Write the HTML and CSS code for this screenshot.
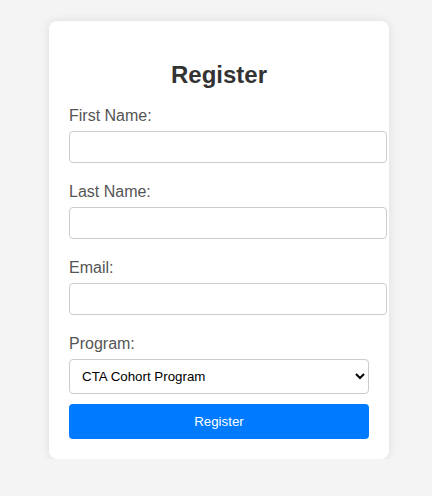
FILE: index.html
```html
<!DOCTYPE html>
<html>
<head>
<meta charset="utf-8">
<link rel="stylesheet" href="styles.css">
</head>
<body>
<div class="card">
  <h2 class="title">Register</h2>
  <form class="form">
    <label class="label" for="first">First Name:</label>
    <input class="field" id="first" type="text">
    <label class="label" for="last">Last Name:</label>
    <input class="field" id="last" type="text">
    <label class="label" for="email">Email:</label>
    <input class="field" id="email" type="email">
    <label class="label" for="program">Program:</label>
    <select class="select" id="program">
      <option>CTA Cohort Program</option>
    </select>
    <button class="btn" type="button">Register</button>
  </form>
</div>
</body>
</html>
```

FILE: styles.css
```css
html, body {
  margin: 0;
  padding: 0;
}
body {
  background: #f4f4f4;
  font-family: "Liberation Sans", Arial, sans-serif;
  padding: 21px 0 0 49px;
}
.card {
  width: 300px;
  padding: 20px;
  background: #fff;
  border-radius: 8px;
  box-shadow: 0 0 10px rgba(0, 0, 0, 0.1);
}
.title {
  margin: 20px 0 18px;
  text-align: center;
  font-size: 24px;
  font-weight: bold;
  color: #333;
}
.form {
  margin: 0;
}
.label {
  display: block;
  font-size: 16px;
  line-height: 18px;
  color: #555;
  margin-bottom: 6px;
}
.field {
  display: block;
  width: 100%;
  height: 14px;
  padding: 8px;
  margin: 0 0 20px;
  border: 1px solid #ccc;
  border-radius: 4px;
  font-family: "Liberation Sans", Arial, sans-serif;
  font-size: 13.333px;
  background: #fff;
}
.select {
  display: block;
  width: 100%;
  padding: 8px;
  margin: 0 0 10px;
  border: 1px solid #ccc;
  border-radius: 4px;
  font-family: "Liberation Sans", Arial, sans-serif;
  font-size: 13.333px;
  background: #fff;
  color: #000;
}
.btn {
  display: block;
  width: 100%;
  padding: 10px;
  border: none;
  border-radius: 4px;
  background: #007bff;
  color: #fff;
  font-family: "Liberation Sans", Arial, sans-serif;
  font-size: 13.333px;
  cursor: pointer;
}
```
